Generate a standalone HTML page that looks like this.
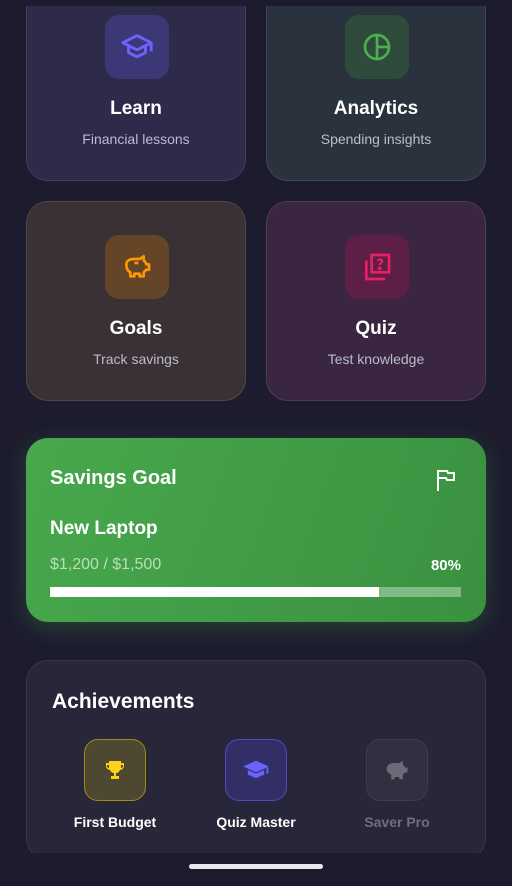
<!DOCTYPE html>
<html><head><meta charset="utf-8"><style>
*{box-sizing:border-box;margin:0;padding:0}
body{width:512px;height:886px;background:#1d1c2e;font-family:"Liberation Sans",sans-serif;position:relative;overflow:hidden;color:#fff}
.card{position:absolute;border-radius:22px;border:1px solid rgba(255,255,255,0.1);text-align:center}
.ib{position:absolute;left:78px;width:64px;height:64px;border-radius:14px;display:flex;align-items:center;justify-content:center}
.t{position:absolute;left:0;right:0;font-size:19px;font-weight:bold}
.s{position:absolute;left:0;right:0;font-size:14px;color:#bdbbcc}
.badge{position:absolute;top:78px;width:62px;height:62px;border-radius:14px;display:flex;align-items:center;justify-content:center}
.bl{position:absolute;top:153px;width:140px;text-align:center;font-size:14px;font-weight:bold}
</style></head><body>
<div class="card" style="left:26px;top:-20px;width:220px;height:201px;background:#2d2a4a">
 <div class="ib" style="top:34px;background:#3c3876"><svg width="34" height="34" viewBox="0 0 24 24" fill="none" stroke="#6c63ff" stroke-width="2" stroke-linejoin="round"><path d="M2 9l10-5 10 5-10 5z"/><path d="M6 11v5l6 3 6-3v-5"/><path d="M22 9v6"/></svg></div>
 <div class="t" style="top:117px">Learn</div><div class="s" style="top:150px">Financial lessons</div>
</div>
<div class="card" style="left:266px;top:-20px;width:220px;height:201px;background:#2a333d">
 <div class="ib" style="top:34px;background:#2f4b3b"><svg width="32" height="32" viewBox="0 0 24 24" fill="none" stroke="#4caf50" stroke-width="2"><circle cx="12" cy="12" r="9"/><path d="M12 3v18M12 12h9"/></svg></div>
 <div class="t" style="top:117px">Analytics</div><div class="s" style="top:150px">Spending insights</div>
</div>
<div class="card" style="left:26px;top:201px;width:220px;height:200px;background:#3a3135">
 <div class="ib" style="top:33px;background:#654528"><svg width="32" height="32" viewBox="0 0 24 24" fill="none" stroke="#ff9800" stroke-width="2" stroke-linejoin="round"><path d="M4 10c0-3 3-4 6-4h4l3-2v3c1 1 2 2 2 3h2v4h-2l-2 2v3h-3v-2h-4v2H7v-3c-2-1-3-3-3-6z"/><path d="M10 9h3"/></svg></div>
 <div class="t" style="top:116px">Goals</div><div class="s" style="top:149px">Track savings</div>
</div>
<div class="card" style="left:266px;top:201px;width:220px;height:200px;background:#3a2640">
 <div class="ib" style="top:33px;background:#5e1f47"><svg width="32" height="32" viewBox="0 0 24 24" fill="none" stroke="#e91e63" stroke-width="2"><rect x="8" y="3" width="13" height="13"/><path d="M4 7v14h14"/><path d="M12.5 7.5c0-1.5 3.5-1.5 3.5 0s-2 1.5-2 3" stroke-width="1.6"/><circle cx="14" cy="13" r=".5" fill="#e91e63"/></svg></div>
 <div class="t" style="top:116px">Quiz</div><div class="s" style="top:149px">Test knowledge</div>
</div>
<div style="position:absolute;left:0;top:0;width:512px;height:6px;background:#1d1c2e"></div>
<div style="position:absolute;left:26px;top:438px;width:460px;height:184px;border-radius:22px;background:linear-gradient(110deg,#48a84d,#3a9140);box-shadow:0 6px 22px rgba(76,175,80,0.25)">
 <div style="position:absolute;left:24px;top:29px;font-size:20px;font-weight:bold">Savings Goal</div>
 <svg style="position:absolute;left:409px;top:30px" width="22" height="24" viewBox="0 0 22 24" fill="none" stroke="#fff" stroke-width="2"><path d="M3 23V3h9l1 2h6v7h-7l-1-2H3"/></svg>
 <div style="position:absolute;left:24px;top:80px;font-size:19px;font-weight:bold">New Laptop</div>
 <div style="position:absolute;left:24px;top:118px;font-size:16px;color:#b9dfba">$1,200 / $1,500</div>
 <div style="position:absolute;right:25px;top:119px;font-size:15px;font-weight:bold">80%</div>
 <div style="position:absolute;left:24px;top:149px;width:411px;height:10px;background:rgba(255,255,255,0.35)"><div style="width:80%;height:100%;background:#fff"></div></div>
</div>
<div style="position:absolute;left:26px;top:660px;width:460px;height:200px;border-radius:22px;background:#282739;border:1px solid rgba(255,255,255,0.08)">
 <div style="position:absolute;left:25px;top:29px;font-size:21px;font-weight:bold">Achievements</div>
 <div class="badge" style="left:57px;background:#4e4732;border:1.5px solid #a48a10"><svg width="24" height="24" viewBox="0 0 24 24" fill="#ffd21a"><path d="M6 3h12v2h3v3c0 2-2 4-4 4-1 2-2 3-4 3v3h3v3H8v-3h3v-3c-2 0-3-1-4-3-2 0-4-2-4-4V5h3zM4 7v1c0 1 1 2 2 2V7zm16 0h-2v3c1 0 2-1 2-2z"/></svg></div>
 <div class="bl" style="left:18px">First Budget</div>
 <div class="badge" style="left:198px;background:#332f66;border:1.5px solid #5048c8"><svg width="28" height="28" viewBox="0 0 24 24" fill="#6c63ff"><path d="M1 9l11-5 11 5-11 5z"/><path d="M5 12v4l7 3 7-3v-4l-7 3z"/><path d="M21 10h1.5v5H21z"/></svg></div>
 <div class="bl" style="left:159px">Quiz Master</div>
 <div class="badge" style="left:339px;background:#303040;border:1.5px solid #3d3d4e"><svg width="28" height="28" viewBox="0 0 24 24" fill="#6c6b78"><path d="M3 11c0-3 3-5 7-5h4l3-2v3l2 3h2v4h-2l-2 2v4h-3v-2h-4v2H7v-4c-2-1-4-3-4-5z"/></svg></div>
 <div class="bl" style="left:300px;color:#6f6e7e">Saver Pro</div>
</div>
<div style="position:absolute;left:0;top:853px;width:512px;height:33px;background:#1d1c2e"></div>
<div style="position:absolute;left:189px;top:864px;width:134px;height:5px;border-radius:3px;background:#e8e8ee"></div>
</body></html>
